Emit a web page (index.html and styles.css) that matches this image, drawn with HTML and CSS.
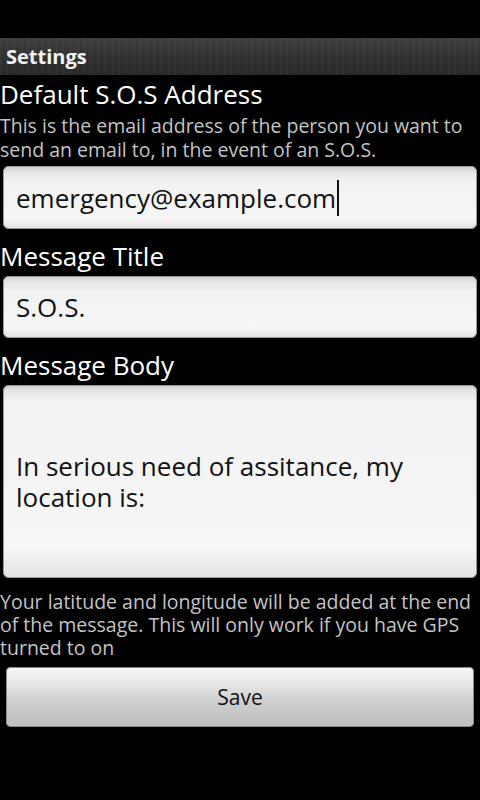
FILE: index.html
```html
<!DOCTYPE html>
<html lang="en">

<head>
    <meta charset="UTF-8">
    <meta name="viewport" content="width=device-width, initial-scale=1.0">
    <title>Settings</title>
    <link rel="stylesheet" href="styles.css">
</head>

<body>

    <div class="status-bar"></div>

    <header class="title-bar">
        <h1>Settings</h1>
    </header>

    <main class="settings">
        <h2 class="label">Default S.O.S Address</h2>
        <p class="hint">This is the email address of the person you want to send an email to, in the event of an S.O.S.</p>
        <div class="field field-first">emergency@example.com<span class="caret"></span></div>

        <h2 class="label label-gap">Message Title</h2>
        <div class="field">S.O.S.</div>

        <h2 class="label label-gap">Message Body</h2>
        <div class="field field-body">In serious need of assitance, my location is:</div>

        <p class="hint hint-footer">Your latitude and longitude will be added at the end of the message. This will only work if you have GPS turned to on</p>

        <button class="save-btn">Save</button>
    </main>

</body>

</html>
```

FILE: styles.css
```css
body {
    font-family: 'Open Sans', 'DejaVu Sans', sans-serif;
    margin: 0;
    padding: 0;
    background-color: #000;
    color: #fff;
    width: 480px;
    height: 800px;
    overflow: hidden;
}

.status-bar {
    height: 38px;
    background-color: #000;
}

.title-bar {
    height: 37px;
    display: flex;
    align-items: center;
    padding-left: 6px;
    background-color: #363636;
    background-image:
        repeating-linear-gradient(90deg, rgba(255, 255, 255, 0.04) 0 1px, transparent 1px 3px, rgba(0, 0, 0, 0.08) 3px 4px, transparent 4px 7px),
        linear-gradient(180deg, #404040, #323232 50%, #2a2a2a);
}

.title-bar h1 {
    margin: 0;
    font-size: 20px;
    font-weight: bold;
    color: #f2f2f2;
    line-height: 24px;
}

.settings {
    display: flex;
    flex-direction: column;
    padding-top: 3px;
}

.label {
    margin: 0;
    font-size: 26px;
    font-weight: normal;
    line-height: 32px;
    color: #fff;
}

.label-gap {
    margin-top: 11px;
}

.hint {
    margin: 4px 0 0 0;
    font-size: 19.5px;
    line-height: 24px;
    color: #c4c4c4;
}

.field {
    margin: 4px 3px 0 3px;
    height: 62px;
    box-sizing: border-box;
    padding: 0 13px;
    display: flex;
    align-items: center;
    font-size: 26px;
    color: #111;
    border-radius: 6px;
    background: linear-gradient(180deg, #cfcfcf 0, #e6e6e6 6px, #f2f2f2 16px, #f6f6f6 85%, #e2e2e2 100%);
    box-shadow: inset 0 0 0 1px #9a9a9a;
}

.field-first {
    height: 63px;
}

.caret {
    display: inline-block;
    width: 2px;
    height: 36px;
    margin-left: 1px;
    background-color: #111;
}

.field-body {
    height: 193px;
    line-height: 31px;
    padding-right: 40px;
}

.hint-footer {
    margin-top: 12px;
    line-height: 23px;
}

.save-btn {
    margin: 8px 6px 0 6px;
    height: 60px;
    font-family: inherit;
    font-size: 21px;
    color: #111;
    border: none;
    border-radius: 5px;
    background: linear-gradient(180deg, #f6f6f6 0, #e6e6e6 30%, #d0d0d0 55%, #bdbdbd 100%);
    box-shadow: inset 0 0 0 1px #8a8a8a;
}
```
